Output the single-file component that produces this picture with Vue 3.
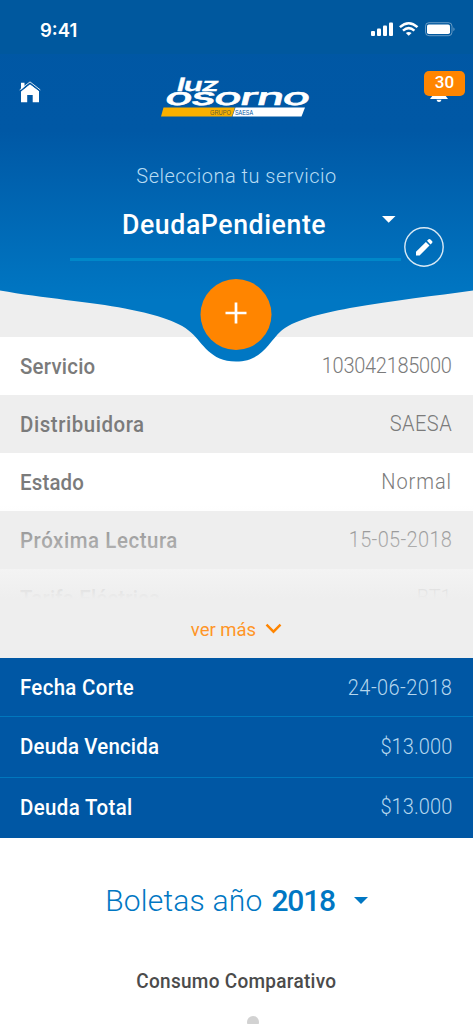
<script setup>
const details = [
  { label: 'Servicio', value: '103042185000', ls: '0.25px', vs: '-0.3px' },
  { label: 'Distribuidora', value: 'SAESA', ls: '0.6px', vs: '0.5px' },
  { label: 'Estado', value: 'Normal', ls: '0.2px', vs: '1px' },
  { label: 'Próxima Lectura', value: '15-05-2018', ls: '0.6px', vs: '0.35px' },
  { label: 'Tarifa Eléctrica', value: 'BT1', ls: '0.2px', vs: '0px' },
]
const debts = [
  { label: 'Fecha Corte', value: '24-06-2018', ls: '0.35px', vs: '0.45px' },
  { label: 'Deuda Vencida', value: '$13.000', ls: '0.2px', vs: '0.1px' },
  { label: 'Deuda Total', value: '$13.000', ls: '0.4px', vs: '0.1px' },
]
</script>

<template>
  <main class="screen">
    <header class="header">
      <svg class="wave" width="473" height="363" viewBox="0 0 473 363">
        <defs>
          <linearGradient id="sky" x1="0" y1="0" x2="0" y2="1">
            <stop offset="0" stop-color="#0057a4" />
            <stop offset="0.36" stop-color="#0058a5" />
            <stop offset="0.83" stop-color="#0077c3" />
            <stop offset="1" stop-color="#0077c3" />
          </linearGradient>
        </defs>
        <path
          fill="url(#sky)"
          d="M0 0H473V290.500C435 296 395 300 350 308C318 314 292 321 281 331C268 343 262 361.500 236 361.500C210 361.500 203 343 191 332.500C178 320 150 313.500 125 308.500C92 302 42 298 0 290.500Z"
        />
        <rect width="473" height="54" fill="#00589e" />
      </svg>

      <div class="status">
        <span class="clock">9:41</span>
        <svg class="signals" width="86" height="18" viewBox="0 0 86 18">
          <g fill="#fff">
            <rect x="1" y="11" width="4" height="5" rx="1" />
            <rect x="7" y="8.500" width="4" height="7.500" rx="1" />
            <rect x="13" y="5.500" width="4" height="10.500" rx="1" />
            <rect x="19" y="2.500" width="4" height="13.500" rx="1" />
            <path d="M38.700 15.800L35.800 12.900Q38.700 10.900 41.600 12.900Z" />
            <rect x="57" y="4.500" width="23" height="9.500" rx="1.800" />
          </g>
          <g fill="none" stroke="#fff" stroke-width="2.500">
            <path d="M29.900 7.200Q38.700 -0.800 47.500 7.200" />
            <path d="M33 10.600Q38.700 5.600 44.400 10.600" />
          </g>
          <rect x="55.500" y="2.700" width="26.500" height="13" rx="3.500" fill="none" stroke="#fff" stroke-opacity="0.400" />
          <path d="M83.500 7.200Q85.500 9.200 83.500 11.200Z" fill="#fff" fill-opacity="0.500" />
        </svg>
      </div>

      <div class="brandbar">
        <svg class="home" width="22" height="22" viewBox="0 0 22 22">
          <path d="M2 9V1.800H5.500V5.500" fill="#fff" />
          <path d="M2 10.500L11 3.200L20 10V21.200H13.700V14H8.200V21.200H2Z" fill="#fff" />
          <path d="M0.700 8.900L11 0.900L21.300 8.900" fill="none" stroke="#fff" stroke-width="1" stroke-opacity="0.850" />
          <path d="M1.200 10.200L11 2.500L20.800 10.200" fill="none" stroke="#0057a4" stroke-width="0.800" />
        </svg>
        <svg class="logo" width="154" height="46" viewBox="0 -4 154 46">
          <g fill="#fff" stroke="#fff" font-family="Inter">
            <text transform="translate(15.500 14.800) skewX(-14) scale(1.700 1)" font-size="18.500" font-weight="600" stroke-width="0.300" textLength="25" lengthAdjust="spacing">luz</text>
            <text transform="translate(3.500 29.300) skewX(-14) scale(1.950 1)" font-size="23.500" font-weight="500" stroke-width="0.500" textLength="74.500" lengthAdjust="spacing">osorno</text>
          </g>
          <path d="M3.500 31.500H75L72 40.500H1Z" fill="#f9b000" />
          <path d="M75.500 31.500H145L141.500 40.500H72.500Z" fill="#fff" />
          <g font-family="Liberation Sans" font-size="6.500">
            <text x="50" y="38.500" fill="#5f5d3a" textLength="21" lengthAdjust="spacingAndGlyphs">GRUPO</text>
            <text x="75" y="38.500" fill="#0057a4" textLength="18" lengthAdjust="spacingAndGlyphs">SAESA</text>
          </g>
        </svg>
        <div class="bell">
          <svg width="18" height="8" viewBox="0 0 18 8">
            <path d="M3 0H15L18 4H0Z M6.500 4.800H11.500Q11 7 9 7Q7 7 6.500 4.800Z" fill="#fff" />
          </svg>
          <span class="badge">30</span>
        </div>
      </div>

      <p class="prompt">Selecciona tu servicio</p>
      <div class="picker">
        <span class="chosen">DeudaPendiente</span>
        <svg class="caret" width="14" height="7" viewBox="0 0 14 7"><path d="M0 0H13.500L6.700 6.800Z" fill="#fff" /></svg>
        <svg class="edit" width="42" height="42" viewBox="0 0 42 42">
          <circle cx="21" cy="21" r="19.200" fill="none" stroke="#fff" stroke-width="1.400" stroke-opacity="0.850" />
          <path d="M13 25.800L22.900 15.900L26.500 19.500L16.600 29.400H13Z" fill="#fff" />
          <path d="M24 14.800L25.600 13.200Q26.400 12.600 27.200 13.200L29.200 15.200Q29.800 16 29.200 16.800L27.600 18.400Z" fill="#fff" />
        </svg>
      </div>
      <button class="add" aria-label="+">
        <svg width="72" height="72" viewBox="0 0 72 72">
          <circle cx="36" cy="35.500" r="35.500" fill="#ff8500" />
          <path d="M25.500 34H46.500M36 23.500V44.500" stroke="#fff" stroke-width="2.700" />
        </svg>
      </button>
    </header>

    <section class="details">
      <div v-for="d in details" :key="d.label" class="row">
        <span class="label" :style="{ letterSpacing: d.ls }">{{ d.label }}</span>
        <span class="value" :style="{ letterSpacing: d.vs }">{{ d.value }}</span>
      </div>
      <div class="fade">
        <span class="more">ver más</span>
        <svg width="17" height="11" viewBox="0 0 17 11"><path d="M1.500 1.700L8.500 8.700L15.500 1.700" fill="none" stroke="#ff8500" stroke-width="2.400" /></svg>
      </div>
    </section>

    <section class="debts">
      <div v-for="d in debts" :key="d.label" class="row">
        <span class="label" :style="{ letterSpacing: d.ls }">{{ d.label }}</span>
        <span class="value" :style="{ letterSpacing: d.vs }">{{ d.value }}</span>
      </div>
    </section>

    <section class="bills">
      <h2 class="year">
        <span class="thin">Boletas año</span>
        <b>2018</b>
        <svg width="14" height="8" viewBox="0 0 14 8"><path d="M0 0H14L7 7Z" fill="#0077c3" /></svg>
      </h2>
      <h3 class="compare">Consumo Comparativo</h3>
      <i class="dot"></i>
    </section>
  </main>
</template>

<style>
body { margin: 0; }
</style>

<style scoped>
.screen {
  width: 473px;
  height: 1024px;
  overflow: hidden;
  background: #fff;
  font-family: Roboto, "Liberation Sans", sans-serif;
}
.header {
  position: relative;
  z-index: 2;
  height: 337px;
  background: #eee;
  display: flex;
  flex-direction: column;
}
.header > * { flex: none; }
.wave { position: absolute; left: 0; top: 0; }
.status, .brandbar, .prompt, .picker, .add { position: relative; }
.status {
  height: 54px;
  box-sizing: border-box;
  padding: 20px 17px 0 40px;
  display: flex;
  justify-content: space-between;
}
.clock {
  font: 600 18.500px/20px Inter, sans-serif;
  letter-spacing: 0;
  color: #fff;
}
.brandbar {
  height: 76px;
  box-sizing: border-box;
  padding: 22px 8px 0 19px;
  display: flex;
  justify-content: space-between;
  align-items: flex-start;
}
.home { margin-top: 5px; }
.logo { margin: -4px 0 0 9px; overflow: visible; }
.bell {
  position: relative;
  width: 41px;
  height: 28px;
  margin-top: -5px;
}
.bell svg { position: absolute; left: 6px; top: 24px; }
.badge {
  position: absolute;
  inset: 0 0 2px 0;
  height: 25px;
  border-radius: 5px;
  background: #ff8500;
  color: #fff;
  font-size: 17px;
  font-weight: 500;
  line-height: 23px;
  text-align: center;
}
.prompt {
  margin: 32px 0 0;
  height: 28px;
  line-height: 28px;
  text-align: center;
  font-size: 20.500px;
  font-weight: 300;
  letter-spacing: 0.500px;
  transform: scaleX(0.975);
  color: #b7dcf3;
}
.picker {
  margin: 9px 72px 0 70px;
  height: 59px;
  border-bottom: 3px solid #0088c9;
}
.chosen {
  display: block;
  padding-left: 52px;
  font-size: 27.500px;
  font-weight: 500;
  line-height: 52px;
  letter-spacing: 0.600px;
  transform: scaleX(0.97);
  transform-origin: 52px 50%;
  color: #fff;
}
.caret { position: absolute; left: 312px; top: 17px; }
.edit { position: absolute; left: 333px; top: 27px; }
.add {
  align-self: center;
  width: 72px;
  height: 72px;
  padding: 0;
  margin: 18px 1px 0 0;
  border: 0;
  background: none;
}
.add svg { display: block; }
.details {
  position: relative;
  height: 321px;
  overflow: hidden;
  background: #eee;
}
.row {
  display: flex;
  justify-content: space-between;
  align-items: center;
  box-sizing: border-box;
  height: 58px;
  padding: 0 21px 0 20px;
  font-size: 21.500px;
}
.details .row { height: 57.900px; background: #eee; color: #7b7b7b; }
.details .row:nth-child(odd) { background: #fff; }
.label { font-weight: 500; padding-top: 1px; transform: scaleX(0.95); transform-origin: left; }
.value { font-weight: 300; transform: scaleX(0.93); transform-origin: right; }
.fade {
  position: absolute;
  inset: 154px 0 0 0;
  display: flex;
  justify-content: center;
  align-items: flex-end;
  gap: 9px;
  padding-bottom: 14px;
  background: linear-gradient(rgba(238, 238, 238, 0) 14px, #eee 108px);
}
.more {
  font-size: 18.500px;
  line-height: 27px;
  letter-spacing: 0;
  color: #ff9526;
}
.fade svg { margin-bottom: 10px; }
.debts {
  box-sizing: border-box;
  height: 179.500px;
  background: #0057a4;
  color: #fff;
}
.debts .row { height: 59px; border-bottom: 1px solid #0077bd; }
.debts .row:nth-child(2) { height: 61px; padding-bottom: 2px; }
.debts .value { color: #b4d6ee; }
.debts .row:last-child { border-bottom: 0; padding-bottom: 2px; }
.bills { display: flex; flex-direction: column; align-items: center; }
.year {
  margin: 43px 0 0;
  display: flex;
  align-items: center;
  height: 40px;
  font-size: 30px;
  color: #0077c3;
}
.thin { font-weight: 300; letter-spacing: 0.200px; }
.year b { font-weight: 500; margin: 0 19px 0 9px; font-size: 30px; letter-spacing: -1.200px; }
.compare {
  margin: 46px 0 0;
  line-height: 28px;
  font-size: 20px;
  font-weight: 500;
  letter-spacing: 0.300px;
  transform: scaleX(0.95);
  color: #4b4b4b;
}
.dot {
  width: 12px;
  height: 12px;
  margin: 21px 0 0 33px;
  border-radius: 50%;
  background: #d2d2d2;
}
</style>
